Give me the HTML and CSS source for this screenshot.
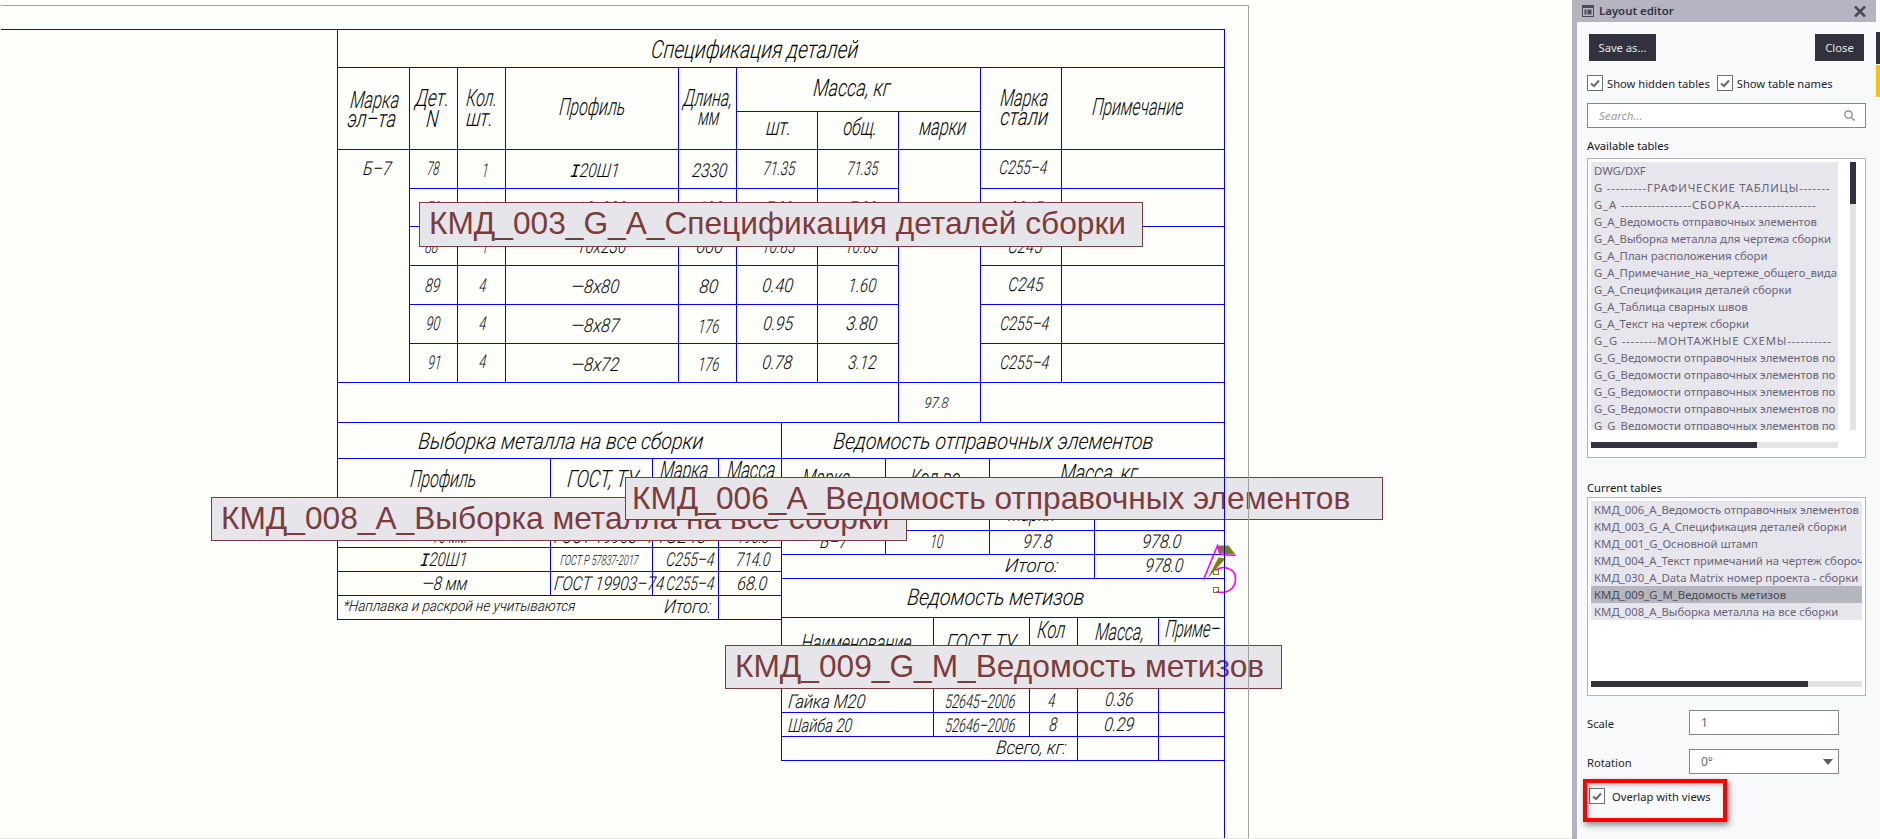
FILE: index.html
```html
<!DOCTYPE html>
<html lang="ru">
<head>
<meta charset="utf-8">
<title>Layout editor</title>
<link rel="stylesheet" href="styles.css">
</head>
<body>
<div class="app">
  <main class="canvas">
    <svg class="drawing" width="1572" height="838" viewBox="-0.5 -0.5 1572 838">
      <path class="grid" d="M0 29H1224M337 67H1224M736 111H980M337 149H1224M409 188H898M980 188H1224M409 226H898M980 226H1224M409 265H898M980 265H1224M409 304H898M980 304H1224M409 343H898M980 343H1224M337 382H1224M337 422H1224M337 29V619M409 67V382M457 67V382M505 67V382M678 67V382M736 67V382M817 111V382M898 111V422M980 67V422M1061 67V382M337 458H781M337 523H781M337 547H781M337 571H781M337 595H781M337 619H781M550 458V595M652 458V595M718 458V619M781 422V760M781 458H1224M989 494H1224M781 530H1224M781 554H1224M781 578H1224M781 617H1224M781 688H1224M781 712H1224M781 736H1224M781 760H1224M885 458V554M989 458V554M1094 494V578M933 617V736M1029 617V736M1077 617V760M1158 617V760"/>
      <g class="cad">
        <text class="t" x="651" y="58" textLength="207" lengthAdjust="spacingAndGlyphs">Спецификация деталей</text>
        <text class="h" x="350" y="108" textLength="49" lengthAdjust="spacingAndGlyphs">Марка</text>
        <text class="h" x="347" y="127" textLength="49" lengthAdjust="spacingAndGlyphs">эл–та</text>
        <text class="h" x="415" y="106" textLength="34" lengthAdjust="spacingAndGlyphs">Дет.</text>
        <text class="h" x="426" y="127" textLength="12" lengthAdjust="spacingAndGlyphs">N</text>
        <text class="h" x="466" y="106" textLength="31" lengthAdjust="spacingAndGlyphs">Кол.</text>
        <text class="h" x="466" y="126" textLength="27" lengthAdjust="spacingAndGlyphs">шт.</text>
        <text class="h" x="559" y="115" textLength="66" lengthAdjust="spacingAndGlyphs">Профиль</text>
        <text class="h" x="683" y="106" textLength="49" lengthAdjust="spacingAndGlyphs">Длина,</text>
        <text class="h" x="698" y="125" textLength="21" lengthAdjust="spacingAndGlyphs">мм</text>
        <text class="h" x="813" y="96" textLength="77" lengthAdjust="spacingAndGlyphs">Масса, кг</text>
        <text class="h" x="766" y="135" textLength="25" lengthAdjust="spacingAndGlyphs">шт.</text>
        <text class="h" x="843" y="135" textLength="34" lengthAdjust="spacingAndGlyphs">общ.</text>
        <text class="h" x="919" y="135" textLength="47" lengthAdjust="spacingAndGlyphs">марки</text>
        <text class="h" x="1000" y="106" textLength="48" lengthAdjust="spacingAndGlyphs">Марка</text>
        <text class="h" x="1000" y="125" textLength="48" lengthAdjust="spacingAndGlyphs">стали</text>
        <text class="h" x="1092" y="115" textLength="91" lengthAdjust="spacingAndGlyphs">Примечание</text>

        <text class="r" x="363" y="175" textLength="28" lengthAdjust="spacingAndGlyphs">Б–7</text>
        <text class="r" x="427" y="175" textLength="12" lengthAdjust="spacingAndGlyphs">78</text>
        <text class="r" x="482" y="177" textLength="6" lengthAdjust="spacingAndGlyphs">1</text>
        <text class="r" x="570" y="177" textLength="49" lengthAdjust="spacingAndGlyphs"><tspan class="beam">I</tspan>20Ш1</text>
        <text class="r" x="692" y="177" textLength="35" lengthAdjust="spacingAndGlyphs">2330</text>
        <text class="r" x="763" y="175" textLength="32" lengthAdjust="spacingAndGlyphs">71.35</text>
        <text class="r" x="847" y="175" textLength="31" lengthAdjust="spacingAndGlyphs">71.35</text>
        <text class="r" x="999" y="174" textLength="48" lengthAdjust="spacingAndGlyphs">С255–4</text>

        <text class="r" x="427" y="215" textLength="13" lengthAdjust="spacingAndGlyphs">79</text>
        <text class="r" x="482" y="215" textLength="6" lengthAdjust="spacingAndGlyphs">1</text>
        <text class="r" x="565" y="215" textLength="61" lengthAdjust="spacingAndGlyphs">—10х230</text>
        <text class="r" x="696" y="215" textLength="27" lengthAdjust="spacingAndGlyphs">600</text>
        <text class="r" x="766" y="215" textLength="26" lengthAdjust="spacingAndGlyphs">7.00</text>
        <text class="r" x="849" y="215" textLength="27" lengthAdjust="spacingAndGlyphs">7.00</text>
        <text class="r" x="1008" y="215" textLength="34" lengthAdjust="spacingAndGlyphs">С245</text>

        <text class="r" x="425" y="253" textLength="13" lengthAdjust="spacingAndGlyphs">88</text>
        <text class="r" x="482" y="253" textLength="6" lengthAdjust="spacingAndGlyphs">1</text>
        <text class="r" x="565" y="253" textLength="61" lengthAdjust="spacingAndGlyphs">—10х230</text>
        <text class="r" x="696" y="253" textLength="27" lengthAdjust="spacingAndGlyphs">600</text>
        <text class="r" x="762" y="253" textLength="33" lengthAdjust="spacingAndGlyphs">10.85</text>
        <text class="r" x="845" y="253" textLength="33" lengthAdjust="spacingAndGlyphs">10.85</text>
        <text class="r" x="1008" y="253" textLength="34" lengthAdjust="spacingAndGlyphs">С245</text>

        <text class="r" x="425" y="292" textLength="15" lengthAdjust="spacingAndGlyphs">89</text>
        <text class="r" x="479" y="292" textLength="7" lengthAdjust="spacingAndGlyphs">4</text>
        <text class="r" x="571" y="293" textLength="48" lengthAdjust="spacingAndGlyphs">—8х80</text>
        <text class="r" x="699" y="293" textLength="19" lengthAdjust="spacingAndGlyphs">80</text>
        <text class="r" x="762" y="292" textLength="31" lengthAdjust="spacingAndGlyphs">0.40</text>
        <text class="r" x="848" y="292" textLength="28" lengthAdjust="spacingAndGlyphs">1.60</text>
        <text class="r" x="1008" y="291" textLength="35" lengthAdjust="spacingAndGlyphs">С245</text>

        <text class="r" x="426" y="330" textLength="14" lengthAdjust="spacingAndGlyphs">90</text>
        <text class="r" x="479" y="330" textLength="7" lengthAdjust="spacingAndGlyphs">4</text>
        <text class="r" x="571" y="332" textLength="48" lengthAdjust="spacingAndGlyphs">—8х87</text>
        <text class="r" x="698" y="333" textLength="21" lengthAdjust="spacingAndGlyphs">176</text>
        <text class="r" x="763" y="330" textLength="30" lengthAdjust="spacingAndGlyphs">0.95</text>
        <text class="r" x="846" y="330" textLength="31" lengthAdjust="spacingAndGlyphs">3.80</text>
        <text class="r" x="1000" y="330" textLength="49" lengthAdjust="spacingAndGlyphs">С255–4</text>

        <text class="r" x="428" y="369" textLength="13" lengthAdjust="spacingAndGlyphs">91</text>
        <text class="r" x="479" y="368" textLength="7" lengthAdjust="spacingAndGlyphs">4</text>
        <text class="r" x="571" y="371" textLength="48" lengthAdjust="spacingAndGlyphs">—8х72</text>
        <text class="r" x="698" y="371" textLength="21" lengthAdjust="spacingAndGlyphs">176</text>
        <text class="r" x="762" y="369" textLength="30" lengthAdjust="spacingAndGlyphs">0.78</text>
        <text class="r" x="848" y="369" textLength="28" lengthAdjust="spacingAndGlyphs">3.12</text>
        <text class="r" x="1000" y="369" textLength="49" lengthAdjust="spacingAndGlyphs">С255–4</text>
        <text class="s" x="924" y="408" textLength="24" lengthAdjust="spacingAndGlyphs">97.8</text>

        <text class="m" x="418" y="449" textLength="285" lengthAdjust="spacingAndGlyphs">Выборка металла на все сборки</text>
        <text class="h" x="410" y="487" textLength="66" lengthAdjust="spacingAndGlyphs">Профиль</text>
        <text class="h" x="567" y="487" textLength="71" lengthAdjust="spacingAndGlyphs">ГОСТ, ТУ</text>
        <text class="h" x="660" y="478" textLength="48" lengthAdjust="spacingAndGlyphs">Марка</text>
        <text class="h" x="727" y="478" textLength="48" lengthAdjust="spacingAndGlyphs">Масса</text>
        <text class="r" x="422" y="543" textLength="45" lengthAdjust="spacingAndGlyphs">—10 мм</text>
        <text class="r" x="554" y="543" textLength="110" lengthAdjust="spacingAndGlyphs">ГОСТ 19903–74</text>
        <text class="r" x="666" y="543" textLength="40" lengthAdjust="spacingAndGlyphs">С245</text>
        <text class="r" x="737" y="543" textLength="32" lengthAdjust="spacingAndGlyphs">195.8</text>
        <text class="r" x="420" y="566" textLength="47" lengthAdjust="spacingAndGlyphs"><tspan class="beam">I</tspan>20Ш1</text>
        <text class="x" x="560" y="565" textLength="78" lengthAdjust="spacingAndGlyphs">ГОСТ Р 57837-2017</text>
        <text class="r" x="666" y="566" textLength="48" lengthAdjust="spacingAndGlyphs">С255–4</text>
        <text class="r" x="736" y="566" textLength="34" lengthAdjust="spacingAndGlyphs">714.0</text>
        <text class="r" x="422" y="590" textLength="45" lengthAdjust="spacingAndGlyphs">—8 мм</text>
        <text class="r" x="554" y="590" textLength="110" lengthAdjust="spacingAndGlyphs">ГОСТ 19903–74</text>
        <text class="r" x="666" y="590" textLength="48" lengthAdjust="spacingAndGlyphs">С255–4</text>
        <text class="r" x="737" y="590" textLength="30" lengthAdjust="spacingAndGlyphs">68.0</text>
        <text class="s" x="343" y="611" textLength="232" lengthAdjust="spacingAndGlyphs">*Наплавка и раскрой не учитываются</text>
        <text class="r" x="664" y="613" textLength="47" lengthAdjust="spacingAndGlyphs">Итого:</text>

        <text class="m" x="833" y="449" textLength="320" lengthAdjust="spacingAndGlyphs">Ведомость отправочных элементов</text>
        <text class="h" x="802" y="486" textLength="48" lengthAdjust="spacingAndGlyphs">Марка</text>
        <text class="h" x="910" y="486" textLength="50" lengthAdjust="spacingAndGlyphs">Кол-во</text>
        <text class="h" x="1060" y="481" textLength="77" lengthAdjust="spacingAndGlyphs">Масса, кг</text>
        <text class="h" x="1008" y="521" textLength="47" lengthAdjust="spacingAndGlyphs">Марки</text>
        <text class="r" x="820" y="548" textLength="27" lengthAdjust="spacingAndGlyphs">Б–7</text>
        <text class="r" x="930" y="548" textLength="13" lengthAdjust="spacingAndGlyphs">10</text>
        <text class="r" x="1023" y="548" textLength="29" lengthAdjust="spacingAndGlyphs">97.8</text>
        <text class="r" x="1142" y="548" textLength="39" lengthAdjust="spacingAndGlyphs">978.0</text>
        <text class="r" x="1005" y="572" textLength="53" lengthAdjust="spacingAndGlyphs">Итого:</text>
        <text class="r" x="1145" y="572" textLength="38" lengthAdjust="spacingAndGlyphs">978.0</text>

        <text class="m" x="907" y="605" textLength="177" lengthAdjust="spacingAndGlyphs">Ведомость метизов</text>
        <text class="h" x="801" y="651" textLength="110" lengthAdjust="spacingAndGlyphs">Наименование</text>
        <text class="h" x="946" y="651" textLength="70" lengthAdjust="spacingAndGlyphs">ГОСТ, ТУ</text>
        <text class="h" x="1037" y="638" textLength="28" lengthAdjust="spacingAndGlyphs">Кол</text>
        <text class="h" x="1095" y="640" textLength="49" lengthAdjust="spacingAndGlyphs">Масса,</text>
        <text class="h" x="1165" y="637" textLength="55" lengthAdjust="spacingAndGlyphs">Приме–</text>
        <text class="r" x="788" y="708" textLength="77" lengthAdjust="spacingAndGlyphs">Гайка М20</text>
        <text class="r" x="945" y="708" textLength="70" lengthAdjust="spacingAndGlyphs">52645–2006</text>
        <text class="r" x="1048" y="707" textLength="7" lengthAdjust="spacingAndGlyphs">4</text>
        <text class="r" x="1105" y="706" textLength="28" lengthAdjust="spacingAndGlyphs">0.36</text>
        <text class="r" x="788" y="732" textLength="64" lengthAdjust="spacingAndGlyphs">Шайба 20</text>
        <text class="r" x="945" y="732" textLength="70" lengthAdjust="spacingAndGlyphs">52646–2006</text>
        <text class="r" x="1049" y="731" textLength="8" lengthAdjust="spacingAndGlyphs">8</text>
        <text class="r" x="1104" y="731" textLength="30" lengthAdjust="spacingAndGlyphs">0.29</text>
        <text class="r" x="996" y="754" textLength="70" lengthAdjust="spacingAndGlyphs">Всего, кг:</text>
      </g>
      <g class="weld">
        <path class="olive" d="M1218 545H1228L1235 554L1218 553ZM1218 557L1225 558L1207 578Z"/>
        <rect class="pad" x="1213" y="569" width="5" height="5"/>
        <rect class="pad" x="1213" y="587" width="5" height="5"/>
        <path class="pink" d="M1203 579L1217 545L1220 554L1235 555M1215 570C1222 564 1235 568 1235 578C1235 590 1224 594 1216 591"/>
      </g>
    </svg>

    <div class="tag tag-008">КМД_008_А_Выборка металла на все сборки</div>
    <div class="tag tag-003">КМД_003_G_А_Спецификация деталей сборки</div>
    <div class="tag tag-009">КМД_009_G_М_Ведомость метизов</div>
    <div class="tag tag-006">КМД_006_А_Ведомость отправочных элементов</div>

    <svg class="drawing frame" width="1572" height="838" viewBox="-0.5 -0.5 1572 838">
      <path class="sheet" d="M0 5H1248V838"/>
      <path class="grid" d="M1224 29V837"/>
    </svg>
  </main>

  <aside class="panel">
    <header class="titlebar">
      <svg class="title-icon" width="12" height="12" viewBox="0 0 12 12">
        <path class="ti-fill" d="M0 0H12V12H0ZM1 3V11H11V3Z"/>
        <path class="ti-fill" d="M2.5 4.5H4.5V9.5H2.5ZM5.5 4.5H9.5V9.5H5.5Z"/>
      </svg>
      <span class="title-text">Layout editor</span>
      <svg class="title-close" width="12" height="11" viewBox="0 0 12 11"><path d="M1 .5L11 10.5M11 .5L1 10.5"/></svg>
    </header>

    <div class="panel-body">
      <div class="btn-row">
        <button class="btn btn-save">Save as...</button>
        <button class="btn btn-close">Close</button>
      </div>

      <div class="check-row">
        <label class="check">
          <svg class="box" width="16" height="16" viewBox="0 0 16 16"><rect x=".5" y=".5" width="15" height="15"/><path d="M4 8.5L7 11L12 5.5"/></svg>
          <span>Show hidden tables</span>
        </label>
        <label class="check">
          <svg class="box" width="16" height="16" viewBox="0 0 16 16"><rect x=".5" y=".5" width="15" height="15"/><path d="M4 8.5L7 11L12 5.5"/></svg>
          <span>Show table names</span>
        </label>
      </div>

      <div class="search">
        <span class="search-ph">Search...</span>
        <svg class="search-icon" width="11" height="11" viewBox="0 0 11 11"><circle cx="4.5" cy="4.5" r="3.7"/><path d="M7.3 7.3L10.5 10.5"/></svg>
      </div>

      <div class="group-label group-available">Available tables</div>
      <div class="listbox listbox-available">
        <div class="list-wrap">
          <ul class="items items-available">
            <li>DWG/DXF</li>
            <li class="dashed">G ---------ГРАФИЧЕСКИЕ ТАБЛИЦЫ-------</li>
            <li class="dashed">G_A ----------------СБОРКА-----------------</li>
            <li>G_A_Ведомость отправочных элементов</li>
            <li>G_A_Выборка металла для чертежа сборки</li>
            <li>G_A_План расположения сбори</li>
            <li>G_A_Примечание_на_чертеже_общего_вида</li>
            <li>G_A_Спецификация деталей сборки</li>
            <li>G_A_Таблица сварных швов</li>
            <li>G_A_Текст на чертеж сборки</li>
            <li class="dashed">G_G --------МОНТАЖНЫЕ СХЕМЫ----------</li>
            <li>G_G_Ведомости отправочных элементов по</li>
            <li>G_G_Ведомости отправочных элементов по</li>
            <li>G_G_Ведомости отправочных элементов по</li>
            <li>G_G_Ведомости отправочных элементов по</li>
            <li>G_G_Ведомости отправочных элементов по</li>
          </ul>
          <div class="vbar"><div class="vthumb"></div></div>
        </div>
        <div class="hbar hbar-available"><div class="hthumb thumb-available"></div></div>
      </div>

      <div class="group-label group-current">Current tables</div>
      <div class="listbox listbox-current">
        <ul class="items items-current">
          <li>КМД_006_А_Ведомость отправочных элементов</li>
          <li>КМД_003_G_А_Спецификация деталей сборки</li>
          <li>КМД_001_G_Основной штамп</li>
          <li>КМД_004_А_Текст примечаний на чертеж сборочного</li>
          <li>КМД_030_А_Data Matrix номер проекта - сборки - лист</li>
          <li class="selected">КМД_009_G_М_Ведомость метизов</li>
          <li>КМД_008_А_Выборка металла на все сборки</li>
        </ul>
        <div class="hbar hbar-current"><div class="hthumb thumb-current"></div></div>
      </div>

      <div class="field field-scale">
        <span class="field-label">Scale</span>
        <div class="input">1</div>
      </div>
      <div class="field field-rotation">
        <span class="field-label">Rotation</span>
        <div class="input input-select">0°<svg class="caret" width="10" height="6" viewBox="0 0 10 6"><path d="M0 0H10L5 6Z"/></svg></div>
      </div>

      <label class="check check-overlap">
        <svg class="box" width="16" height="16" viewBox="0 0 16 16"><rect x=".5" y=".5" width="15" height="15"/><path d="M4 8.5L7 11L12 5.5"/></svg>
        <span>Overlap with views</span>
      </label>
    </div>
    <div class="highlight"></div>
  </aside>

  <div class="rail">
    <div class="rail-dark"></div>
    <div class="rail-amber"></div>
  </div>
</div>
</body>
</html>
```

FILE: styles.css
```css
html, body {
  margin: 0;
  padding: 0;
  height: 839px;
  overflow: hidden;
  background: #fefefa;
}
* { box-sizing: border-box; }

.app {
  display: flex;
  width: 1880px;
  height: 839px;
  font-family: "Noto Sans", "Open Sans", sans-serif;
  font-size: 11.2px;
}

/* drawing area */
.canvas {
  position: relative;
  flex: 0 0 1572px;
  height: 839px;
  background: #fefefa;
  border-bottom: 1px solid #e4e4e4;
  overflow: hidden;
}
.drawing { position: absolute; left: 0; top: 0; display: block; }
.frame { pointer-events: none; }
.grid { fill: none; stroke: #0000ff; stroke-width: 1; shape-rendering: crispEdges; }
.sheet { fill: none; stroke: #a0a0a0; stroke-width: 1; shape-rendering: crispEdges; }

.cad text {
  font-family: Roboto, "Open Sans", sans-serif;
  font-style: italic;
  font-weight: 300;
  fill: #000;
  transform-box: fill-box;
  transform-origin: 50% 50%;
  transform: skewX(-6deg);
}
.cad .t { font-size: 25px; }
.cad .h { font-size: 24px; }
.cad .m { font-size: 23px; }
.cad .r { font-size: 19px; }
.cad .s { font-size: 15px; }
.cad .x { font-size: 14px; }
.cad .beam { font-family: "Liberation Mono", monospace; }

.olive { fill: #808000; }
.pad { fill: none; stroke: #808000; stroke-width: 1; }
.pink { fill: none; stroke: #ff00ff; stroke-width: 1.6; }

.tag {
  position: absolute;
  background: #e6e6ea;
  border: 1px solid #7d3c3c;
  color: #7d3c3c;
  font-family: "Liberation Sans", Arial, sans-serif;
  font-size: 31.7px;
  line-height: 41px;
  padding-left: 9px;
  white-space: nowrap;
}
.tag-003 { left: 419px; top: 202px; width: 724px; height: 45px; }
.tag-006 { left: 625px; top: 477px; width: 758px; height: 43px; padding-left: 6px; }
.tag-008 { left: 211px; top: 497px; width: 696px; height: 44px; }
.tag-009 { left: 725px; top: 645px; width: 557px; height: 44px; }

/* side panel */
.panel {
  position: relative;
  flex: 0 0 304px;
  height: 839px;
  background: #f8f9fb;
  border-left: 5px solid #b4b4bd;
}
.titlebar {
  display: flex;
  align-items: center;
  height: 22px;
  padding: 0 10px 0 5px;
  background: #b4b5c0;
}
.title-icon { flex: none; margin-right: 5px; }
.ti-fill { fill: #4b4b57; }
.title-text { flex: 1; padding-bottom: 2px; font-size: 11.4px; font-weight: 600; color: #32323f; }
.title-close path { fill: none; stroke: #4b4b57; stroke-width: 2.6; }

.panel-body { padding: 12px 10px 0; }

.btn-row { display: flex; justify-content: space-between; padding: 0 2px; }
.btn {
  height: 27px;
  padding: 0;
  border: 0;
  background: #32323f;
  color: #e6e6e6;
  font-family: inherit;
  font-size: 11.2px;
}
.btn-save { width: 67px; }
.btn-close { width: 49px; }

.check-row { display: flex; gap: 7px; margin-top: 14px; }
.check { display: flex; align-items: center; gap: 4px; height: 16px; color: #1e1e28; }
.box rect { fill: #fff; stroke: #6f6f7a; }
.box path { fill: none; stroke: #6a6a75; stroke-width: 2; }

.search {
  display: flex;
  align-items: center;
  justify-content: space-between;
  height: 25px;
  margin-top: 12px;
  padding: 0 10px 0 11px;
  background: #fff;
  border: 1px solid #85858f;
}
.search-ph { font-style: italic; color: #9a9aa2; font-size: 11.6px; }
.search-icon circle, .search-icon path { fill: none; stroke: #7d7d86; stroke-width: 1.2; }

.group-label { height: 16px; line-height: 16px; color: #14141c; }
.group-available { margin-top: 10px; margin-bottom: 4px; }
.group-current { margin-top: 22px; margin-bottom: 1px; }

.listbox {
  padding: 3px;
  background: #fff;
  border: 1px solid #b4b4bd;
}
.listbox-available { height: 300px; }
.listbox-current { height: 199px; }

.list-wrap { display: flex; gap: 12px; height: 268px; }
.items {
  margin: 0;
  padding: 0;
  list-style: none;
  overflow: hidden;
  color: #6a6478;
  font-size: 11.35px;
}
.items li {
  height: 17px;
  padding-left: 3px;
  line-height: 17px;
  white-space: nowrap;
  overflow: hidden;
  background: #e6e6ec;
}
.items .dashed { letter-spacing: .8px; }
.items-available { width: 247px; height: 268px; }
.items-current { width: 271px; height: 180px; }
.items .selected { background: #b4b5bd; color: #4a4a55; }

.vbar { width: 6px; height: 268px; background: #e4e4e4; }
.vthumb { height: 42px; background: #32323f; }
.hbar { height: 6px; background: #e4e4e4; }
.hbar-available { width: 247px; margin-top: 12px; }
.hthumb { height: 6px; background: #32323f; }
.thumb-available { width: 166px; }
.thumb-current { width: 217px; }

.field { display: flex; align-items: center; color: #1e1e28; }
.field-scale { margin-top: 14px; }
.field-rotation { margin-top: 14px; }
.field-label { flex: 0 0 102px; padding-top: 2px; }
.input {
  position: relative;
  display: flex;
  align-items: center;
  width: 150px;
  height: 25px;
  padding-left: 11px;
  background: #fff;
  border: 1px solid #85858f;
  color: #6a6478;
  font-size: 12px;
}
.input-select { justify-content: space-between; padding-right: 5px; }
.caret path { fill: #5a5a64; }

.check-overlap { margin: 14px 0 0 2px; gap: 7px; }

.highlight {
  position: absolute;
  left: 6px;
  top: 779px;
  width: 144px;
  height: 43px;
  border: 4px solid #ff0000;
  box-shadow: 2px 3px 6px rgba(0, 0, 0, .45), inset 2px 2px 5px rgba(0, 0, 0, .25);
}

.rail {
  flex: 0 0 4px;
  padding-top: 32px;
  background: #fafafa;
}
.rail-dark { height: 32px; background: #32323f; }
.rail-amber { height: 32px; margin-top: 1px; background: #ffc000; }
```
